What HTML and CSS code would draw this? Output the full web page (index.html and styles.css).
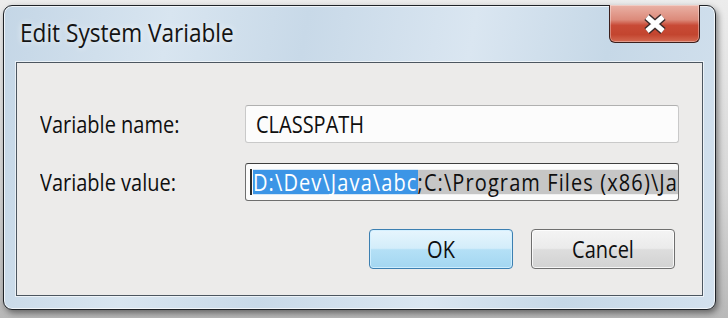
FILE: index.html
```html
<!DOCTYPE html>
<html>
<head>
<meta charset="utf-8">
<title>Edit System Variable</title>
<link rel="stylesheet" href="styles.css">
</head>
<body>
<div class="window">
  <div class="titlebar">
    <span class="title">Edit System Variable</span>
    <div class="close">
      <svg width="30" height="22" viewBox="0 0 30 22">
        <path d="M7 4 L23 18 M23 4 L7 18" stroke="#3a2a2a" stroke-width="8" fill="none"/>
        <path d="M7 4 L23 18 M23 4 L7 18" stroke="#ffffff" stroke-width="5" fill="none"/>
      </svg>
    </div>
  </div>
  <div class="content">
    <div class="form">
      <label class="label">Variable name:</label>
      <div class="input"><span class="text">CLASSPATH</span></div>
      <label class="label">Variable value:</label>
      <div class="input focused"><span class="caret"></span><span class="text value"><span class="sel">D:\Dev\Java\abc</span><span class="rest">;C:\Program Files (x86)\Ja</span></span></div>
    </div>
    <div class="buttons">
      <div class="btn default"><span class="btn-text">OK</span></div>
      <div class="btn"><span class="btn-text">Cancel</span></div>
    </div>
  </div>
</div>
</body>
</html>
```
FILE: styles.css
```css
html, body {
  margin: 0;
  padding: 0;
}
body {
  width: 728px;
  height: 318px;
  overflow: hidden;
  background: linear-gradient(to bottom, #ececec 0%, #d6d6d6 60%, #b8b8b8 100%);
  font-family: "Open Sans", "Noto Sans", sans-serif;
}
.window {
  box-sizing: border-box;
  margin: 5px 0 0 3px;
  width: 713px;
  height: 305px;
  border: 1px solid #1f2328;
  border-radius: 9px;
  background: linear-gradient(100deg, #c4d6e6 0%, #d8e5f0 22%, #c8d9e8 40%, #dae6f1 62%, #c6d8e7 80%, #d3e1ee 100%);
  box-shadow: inset 0 0 0 1px rgba(255,255,255,0.7), 2px 3px 6px rgba(0,0,0,0.45);
  padding: 0 12px 13px 12px;
  display: flex;
  flex-direction: column;
}
.titlebar {
  height: 56px;
  display: flex;
  align-items: flex-start;
  justify-content: space-between;
}
.title {
  display: inline-block;
  margin: 12px 0 0 4px;
  font-size: 22.6px;
  line-height: 30px;
  color: #141414;
  text-shadow: 0 0 6px rgba(255,255,255,0.9);
  transform: scaleY(1.12);
  transform-origin: left center;
}
.close {
  box-sizing: border-box;
  width: 91px;
  height: 38px;
  margin: -1px 3px 0 0;
  border: 1px solid #3b1f1c;
  border-top: none;
  border-radius: 0 0 6px 6px;
  background: linear-gradient(to bottom, #eab2a6 0%, #dc8a7a 40%, #c84a36 55%, #c3452f 80%, #d46a52 100%);
  box-shadow: inset 0 0 0 1px rgba(255,255,255,0.35);
  display: flex;
  align-items: center;
  justify-content: center;
}
.content {
  flex: 1;
  border: 1px solid #4c5660;
  background: #ecebea;
  padding: 42px 23px 0 23px;
  box-shadow: 0 0 0 1px rgba(255,255,255,0.6);
}
.form {
  display: grid;
  grid-template-columns: 205px 434px;
  row-gap: 20px;
  align-items: center;
}
.label {
  font-size: 20px;
  color: #0f0f0f;
  line-height: 28px;
  transform: scaleY(1.22);
  transform-origin: left center;
}
.input {
  box-sizing: border-box;
  height: 38px;
  border: 1px solid #c9c9c9;
  border-top-color: #b0b0b0;
  border-radius: 3px;
  background: #fcfcfc;
  display: flex;
  align-items: center;
  padding-left: 10px;
  overflow: hidden;
  white-space: nowrap;
}
.input .text {
  display: inline-block;
  font-size: 20px;
  line-height: 20px;
  color: #0f0f0f;
  transform: scaleY(1.22);
  transform-origin: left center;
}
.input.focused {
  border-color: #6e6e6e;
  border-top-color: #3e3e3e;
  padding-left: 4px;
}
.value {
  letter-spacing: 1.1px;
}
.caret {
  width: 3px;
  height: 26px;
  background: #2c2c2c;
  margin-right: 1px;
}
.sel, .rest {
  display: inline-block;
  line-height: 20px;
  height: 20px;
}
.sel {
  background: #3c95e6;
  color: #ffffff;
}
.rest {
  background: #c6c6c6;
  color: #0f0f0f;
}
.buttons {
  display: flex;
  justify-content: flex-end;
  gap: 18px;
  margin-top: 28px;
  padding-right: 4px;
}
.btn {
  box-sizing: border-box;
  width: 144px;
  height: 40px;
  border: 1px solid #6f6f6f;
  border-radius: 4px;
  background: linear-gradient(to bottom, #f4f4f4 0%, #ebebeb 48%, #dddddd 52%, #d2d2d2 100%);
  box-shadow: inset 0 0 0 1px rgba(255,255,255,0.8);
  display: flex;
  align-items: center;
  justify-content: center;
}
.btn-text {
  display: inline-block;
  font-size: 20px;
  line-height: 24px;
  color: #0f0f0f;
  transform: scaleY(1.22);
}
.btn.default {
  border-color: #3c7fb1;
  background: linear-gradient(to bottom, #e6f5fd 0%, #d3edfa 48%, #b4e0f6 52%, #a3d6f1 100%);
  box-shadow: inset 0 0 0 1px rgba(210,240,255,0.9);
}
```
